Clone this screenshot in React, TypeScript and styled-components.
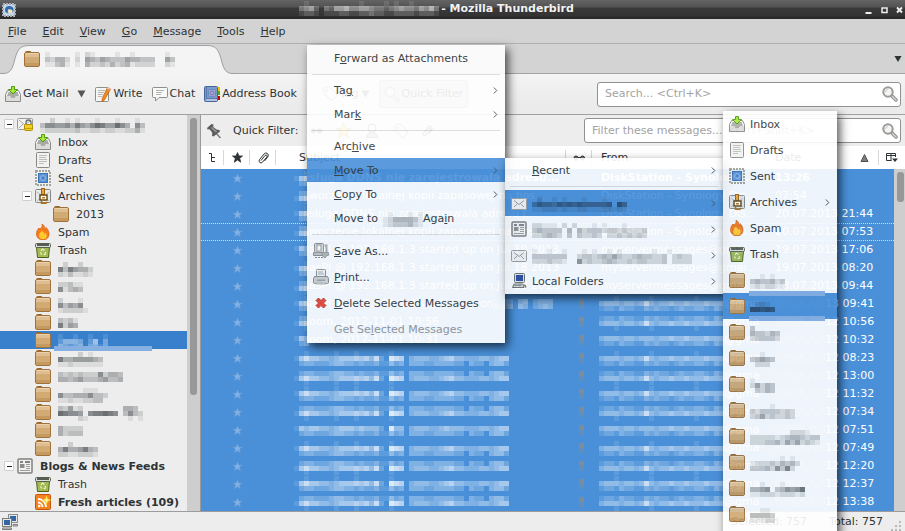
import React from "react";
import styled, { createGlobalStyle, css } from "styled-components";

const GlobalStyle = createGlobalStyle`
  *, *::before, *::after { box-sizing: border-box; }
  html, body { margin: 0; padding: 0; }
  body { font: 11px/18px "DejaVu Sans", sans-serif; color: #2e3436; }
  button, input { font: inherit; color: inherit; margin: 0; padding: 0; border: 0; background: none; }
  button { text-align: left; white-space: nowrap; }
  svg { display: block; flex: none; }
  ul { list-style: none; margin: 0; padding: 0; }
  u { text-underline-offset: 1px; }
`;

/* ---------- Redacted text: a grid of 5px cells, each digit an opacity ---------- */

type MosaicProps = { rows: string[]; color?: string; top?: number; height?: number };

function Mosaic({ rows, color = "#4a4f52", top = 0, height }: MosaicProps) {
  const cols = Math.max(...rows.map((r) => r.length));
  return (
    <svg width={cols * 5} height={height ?? rows.length * 5} fill={color} shapeRendering="crispEdges" aria-hidden="true">
      {rows.flatMap((row, y) =>
        row.split("").map((c, x) =>
          c === "0" ? null : <rect key={`${x}-${y}`} x={x * 5} y={top + y * 5} width={5} height={5} opacity={Number(c) / 10} />
        )
      )}
    </svg>
  );
}

/* ---------- Icons ---------- */

const svg16 = { width: 16, height: 16, viewBox: "0 0 16 16", "aria-hidden": true } as const;

const FolderIcon = () => (
  <svg {...svg16}>
    <path d="M1.5 3V1.5q0-1 1-1H6q1 0 1 1V3z" fill="#b8874b" stroke="#946527" />
    <rect x=".5" y="1.5" width="15" height="14" rx="1.5" fill="#d2aa74" stroke="#a0713a" />
    <path d="M1 3h14v3H1z" fill="#dfbf92" />
    <path d="M1.5 2.5h13" stroke="#ecd3ae" />
    <path d="M1 12h14v3H1z" fill="#c49a60" />
  </svg>
);
const InboxIcon = () => (
  <svg {...svg16}>
    <path d="M2.500 4.500h11l2 4v7H.5v-7z" fill="#f4f4f2" stroke="#8a8c88" />
    <path d="M3.500 6h9l1.500 4h-3l-1 2h-4l-1-2h-3z" fill="#a9aba7" />
    <path d="M1 10h4l1 2h4l1-2h4v5H1z" fill="#dcdcda" />
    <path d="M6.500.5h3v3h3L8 8 3.500 3.500h3z" fill="#a6e83c" stroke="#4e9a06" />
  </svg>
);
const DraftsIcon = () => (
  <svg {...svg16}>
    <rect x="1.500" y=".5" width="13" height="15" rx="1" fill="#f2f2f1" stroke="#878986" />
    <path d="M4 3.500h8M4 5.500h7M4 7.500h8M4 9.500h8M4 11.500h5" stroke="#bcbebb" />
  </svg>
);
const SentIcon = () => (
  <svg {...svg16}>
    <rect x="1" y="1" width="14" height="14" fill="#f1f1ec" stroke="#a2a49e" strokeWidth="2" strokeDasharray="2 1" />
    <rect x="3.500" y="3.500" width="9" height="9" fill="#5a93d6" stroke="#3b73ba" />
    <circle cx="8" cy="8" r="2.500" fill="none" stroke="#8fb6e4" />
    <circle cx="8" cy="8" r="1" fill="#3b73ba" />
  </svg>
);
const ArchiveIcon = () => (
  <svg {...svg16}>
    <rect x=".5" y="1.500" width="15" height="13" rx="1" fill="#e9e9e7" stroke="#868884" />
    <path d="M2 4l5 4-5 5M14 4L9 8l5 5" fill="none" stroke="#b4b6b2" />
    <rect x="6.500" y=".5" width="3" height="6" fill="#e9a43a" stroke="#9c5f0a" />
    <rect x="5" y="7" width="7" height="5" fill="#fff" stroke="#6d4a14" strokeWidth="1.500" />
    <path d="M7 9h3v1.500H7z" fill="#c17d11" />
    <path d="M6.500 13v2.500h4l2-1.500" fill="none" stroke="#b36f0c" strokeWidth="1.500" />
  </svg>
);
const SpamIcon = () => (
  <svg {...svg16}>
    <path d="M7 0c1 3-1 4-2.500 5L4 4C2 6 1.500 8 1.500 10c0 3.500 3 6 6.500 6s6-2.500 6-6c0-3-1.500-5-3-6.500-.3 1-.5 1.500-1.200 2C10 3 9 1 7 0z" fill="#f57c1a" stroke="#d9560b" strokeWidth=".7" />
    <path d="M6.500 7C5 9 4 10 4 12s2 3.300 4 3.300 3.800-1.300 3.800-3.300c0-1.500-.8-2.500-1.300-3.500l-1 1.500C9 8.500 8 7 6.500 7z" fill="#fdc82c" />
  </svg>
);
const TrashIcon = () => (
  <svg {...svg16}>
    <path d="M1.500 5h13l-1 10.500h-11z" fill="#a4bb55" stroke="#4f6217" />
    <rect x=".5" y="1.500" width="15" height="4" rx="1" fill="#dde0da" stroke="#55624a" />
    <rect x="2" y="2" width="12" height="2" fill="#5a5d57" />
    <path d="M6 9l1.500-2L9.500 8.500M10.500 10l-.5 2.500H8.500M5.500 10.500l1 2" fill="none" stroke="#eef5d6" strokeWidth="1.200" />
  </svg>
);
const NewsIcon = () => (
  <svg {...svg16}>
    <rect x="1" y="1" width="14" height="14" rx="1" fill="#f3f3f2" stroke="#7f817e" strokeWidth="1.500" />
    <path d="M3 4h3M8 4h5" stroke="#5e605d" strokeWidth="1.500" />
    <path d="M3 6h4.500v4H3z" fill="#8b8d8a" />
    <path d="M9 6.500h4M9 8.500h4M9 10.500h4M3 12.500h10" stroke="#9a9c99" />
  </svg>
);
const RssIcon = () => (
  <svg {...svg16}>
    <rect x=".5" y=".5" width="15" height="15" rx="1" fill="#f58220" stroke="#c4560a" />
    <path d="M3 8.500a4.500 4.500 0 0 1 4.500 4.500M3 5a8 8 0 0 1 8 8" fill="none" stroke="#fff" strokeWidth="1.800" />
    <circle cx="4.200" cy="12" r="1.300" fill="#fff" />
    <path d="M11.500 2l1 3 3 1-3 1.500-1 3-1-3-3-1.500 3-1z" fill="#fff6a0" stroke="#f1d21b" strokeWidth=".8" />
  </svg>
);
const AccountIcon = () => (
  <svg {...svg16}>
    <rect x=".5" y="2.500" width="15" height="11" rx="1" fill="#f2f2f0" stroke="#9b9d99" />
    <path d="M2 4l6 5 6-5M2 12l4-4" fill="none" stroke="#a7a9a5" />
    <path d="M9 9V6.500a2.500 2.500 0 0 1 5 0V9" fill="none" stroke="#6d6f6b" strokeWidth="1.300" />
    <rect x="7.500" y="8.500" width="8" height="6" rx="1" fill="#f0cf28" stroke="#b29200" />
    <path d="M8 12.500h7" stroke="#c4a000" />
  </svg>
);
const EnvelopeIcon = () => (
  <svg {...svg16}>
    <rect x=".5" y="3.500" width="15" height="11" rx="1" fill="#f4f4f3" stroke="#9b9d99" />
    <path d="M3 12l4-4M13 12L9 8M3 5.500l5 4 5-4" fill="none" stroke="#9b9d99" />
  </svg>
);
const ComputerIcon = () => (
  <svg {...svg16}>
    <rect x="3.500" y=".5" width="10" height="9" rx="1" fill="#e4e5e2" stroke="#6c6e6a" />
    <rect x="5" y="2" width="7" height="6" fill="#294a9a" />
    <path d="M3 11h9l1 3.500H1.500z" fill="#d8dad6" stroke="#6c6e6a" />
    <path d="M3.500 12.500h7" stroke="#8b8d89" />
    <path d="M13.500 11.500l1.500 3" stroke="#6c6e6a" strokeWidth="1.500" />
  </svg>
);
const NetworkIcon = () => (
  <svg {...svg16}>
    <rect x="6.500" y=".5" width="9" height="8" fill="#e8e9e6" stroke="#8c8e8a" />
    <rect x="8" y="2" width="6" height="5" fill="#3465a4" />
    <rect x=".5" y="4.500" width="9" height="8" fill="#e8e9e6" stroke="#7c7e7a" />
    <rect x="2" y="6" width="6" height="5" fill="#3465a4" />
    <path d="M.5 15.500v-1.500h9v1.500zM11 10.500h4.500v1.500H11z" fill="#dcddda" stroke="#7c7e7a" />
  </svg>
);
const WriteIcon = () => (
  <svg {...svg16}>
    <rect x=".5" y="1.500" width="13" height="14" rx="1" fill="#f6f6f5" stroke="#8d8f8b" />
    <path d="M3 4.500h7M3 6.500h6M3 8.500h5M3 10.500h4" stroke="#b6b8b4" />
    <path d="M12.500 1.500l3 1.500-6 11-2.500 1.500.2-3z" fill="#f58a1f" stroke="#b55a08" strokeWidth=".7" />
    <path d="M12.500 1l2.800 1.400-.8 1.600-2.900-1.400z" fill="#e9b9a6" />
  </svg>
);
const ChatIcon = () => (
  <svg {...svg16}>
    <path d="M1.500 1.500h13q1 0 1 1v8q0 1-1 1H7l-3.500 3.500v-3.500h-2q-1 0-1-1v-8q0-1 1-1z" fill="#f8f8f8" stroke="#8d8f8b" />
    <path d="M4 4.500h8M4 6.500h6M4 8.500h5" stroke="#b3b5b1" />
  </svg>
);
const BookIcon = () => (
  <svg {...svg16}>
    <path d="M14 1h2v4h-2z" fill="#f2c500" />
    <path d="M14 5h2v4h-2z" fill="#58a80d" />
    <path d="M14 10h2v4h-2z" fill="#cc0000" />
    <rect x=".5" y=".5" width="13" height="15" rx="1" fill="#7a9ccb" stroke="#456699" />
    <path d="M2.500 1v13M2 12.500h11" stroke="#5877aa" />
    <path d="M2 14h11" stroke="#e6e9ef" />
    <rect x="4.500" y="3.500" width="7" height="7" rx="1" fill="#95a8d6" stroke="#6c89c0" />
    <circle cx="8" cy="7" r="2" fill="none" stroke="#8b78b4" />
  </svg>
);
const TagIcon = () => (
  <svg {...svg16}>
    <path d="M1.500 3l2-2h4l7.500 8-5 6-8.500-8z" fill="#eee" stroke="#777" />
    <circle cx="4.500" cy="4.500" r="1.200" fill="#fff" stroke="#777" />
  </svg>
);
const SearchIcon = () => (
  <svg {...svg16}>
    <path d="M9.500 9.500l4.500 4.500" stroke="#8d8f8b" strokeWidth="3.500" strokeLinecap="round" />
    <path d="M10.500 10.500l3.500 3.500" stroke="#d3d5d1" strokeWidth="1.500" strokeLinecap="round" />
    <circle cx="6" cy="6" r="4.700" fill="#f4f4f4" stroke="#9a9c98" strokeWidth="2" />
    <path d="M3.500 6a2.500 2.500 0 0 1 2.500-2.500" fill="none" stroke="#c9cbc8" />
  </svg>
);
const PinIcon = () => (
  <svg {...svg16}>
    <path d="M9.500 9.500l5 5.500" stroke="#777" strokeWidth="1.300" />
    <path d="M5.500 1l2 .5-.3 2.500 3.300 2.500 3 .5.5 1.500-6.500 5-1.500-.8.300-3-2.800-3.500-2 .3L1 5z" fill="#5d5f5e" />
    <path d="M5.500 4.500l5 4.500" stroke="#a0a2a1" strokeWidth="1.400" />
  </svg>
);
const PersonIcon = () => (
  <svg {...svg16}>
    <circle cx="8" cy="5" r="4" fill="#eee" stroke="#555" />
    <path d="M2.500 14.500q0-5 5.500-5t5.500 5z" fill="#aaa" stroke="#555" />
  </svg>
);
const ClipIcon = () => (
  <svg width="11" height="12" viewBox="0 0 11 12" fill="none" stroke="#2e3436" aria-hidden="true">
    <path d="M3 8.500l4-5q1-1 1.800-.2t0 1.800l-4.300 5q-1.500 1.500-2.800.3t-.2-2.800L6 2q1.800-2 3.500-.5t.2 3.500L6.500 9" />
  </svg>
);
const ThreadIcon = () => (
  <svg width="9" height="11" viewBox="0 0 9 11" fill="none" stroke="#2e3436" aria-hidden="true">
    <path d="M1 1.500h2.500v8H7M3.500 5.500H7" />
  </svg>
);
const GlassesIcon = () => (
  <svg width="13" height="7" viewBox="0 0 13 7" fill="none" stroke="#2e3436" aria-hidden="true">
    <circle cx="3" cy="4" r="2" fill="#777" />
    <circle cx="9.500" cy="4" r="2" fill="#777" />
    <path d="M5 3.500h2.500" />
  </svg>
);
const StarIcon = ({ fill, stroke, size = 11 }: { fill: string; stroke: string; size?: number }) => (
  <svg width={size} height={size} viewBox="0 0 11 11" aria-hidden="true">
    <path d="M5.500.6L7 4h3.500L7.700 6.300l1 3.900-3.200-2.300-3.200 2.300 1-3.900L.5 4H4z" fill={fill} stroke={stroke} strokeWidth=".8" />
  </svg>
);
const PickerIcon = () => (
  <svg width="12" height="11" viewBox="0 0 12 11" fill="none" stroke="#2e3436" aria-hidden="true">
    <path d="M9.500 5V1.500h-9v7h5M.5 3.500h9M5 1.500v7" />
    <path d="M6 6.500h6L9 10z" fill="#2e3436" stroke="none" />
  </svg>
);
const DownTriangle = ({ color = "#555753", w = 9 }: { color?: string; w?: number }) => (
  <svg width={w} height="8" viewBox="0 0 9 8" aria-hidden="true">
    <path d="M.5.5h8l-4 7z" fill={color} />
  </svg>
);
const SortIcon = () => (
  <svg width="9" height="8" viewBox="0 0 9 8" aria-hidden="true">
    <path d="M4.500.5l3.500 7H1z" fill="#7b7d7c" stroke="#4f5351" />
  </svg>
);
const ChevronIcon = () => (
  <svg width="5" height="7" viewBox="0 0 5 7" fill="none" stroke="#4a5254" aria-hidden="true">
    <path d="M.8.5L3.800 3.500l-3 3" />
  </svg>
);
const SaveIcon = () => (
  <svg {...svg16}>
    <rect x="1.500" y=".5" width="9" height="9" rx="1" fill="#dcdddb" stroke="#8b8d8a" />
    <rect x="4" y="2" width="4" height="6" fill="#fafafa" stroke="#9b9d9a" />
    <path d="M.5 9.500h10v3H.5z" fill="#c4c6c3" stroke="#8b8d8a" />
    <path d="M11.500 2.500h2v7" fill="none" stroke="#a5a7a4" strokeWidth="2" />
    <path d="M9 9.500h6.500v3h-1.500L12 15l-3-2.500z" fill="#b3b5b2" stroke="#888a87" strokeWidth=".7" />
    <path d="M2 14.500h8" stroke="#888a87" strokeDasharray="2 1" />
  </svg>
);
const PrintIcon = () => (
  <svg {...svg16}>
    <rect x="3.500" y=".5" width="9" height="8" rx="1" fill="#f7f7f6" stroke="#8b8d8a" />
    <path d="M5 3h5M5 5h6" stroke="#a8aaa7" />
    <path d="M1.500 7.500h13l1 2v4q0 1-1 1h-13q-1 0-1-1v-4z" fill="#d0d1cf" stroke="#8b8d8a" />
    <path d="M4 10.500h8v1.500H4z" fill="#9fa19e" />
    <path d="M3 14.500h10" stroke="#b9bbb8" strokeWidth="2" />
  </svg>
);
const DeleteIcon = () => (
  <svg {...svg16}>
    <path d="M5.500 3L8 5.500 10.500 3 13 5.500 10.500 8l2.500 2.500-2.500 2.500L8 10.500 5.500 13 3 10.500 5.500 8 3 5.500z" fill="#e8412f" stroke="#b3261a" strokeWidth=".8" />
  </svg>
);
const AppIcon = () => (
  <svg width="14" height="14" viewBox="0 0 14 14" aria-hidden="true">
    <rect x="1" y="1" width="12" height="12" fill="#dfe5ea" stroke="#a8aeb4" strokeWidth="2" strokeDasharray="2 1" />
    <rect x="2" y="2" width="10" height="10" fill="#c3d5e8" />
    <path d="M3 7q0-4 4.500-4 3 0 4 3v2l-1 2H6Q3 10 3 7z" fill="#2f69ad" />
    <path d="M6 6.500q2.500-1 4.500 1V10H6.500q-1.500-1.500-.5-3.500z" fill="#f1e3bd" />
  </svg>
);

/* ---------- Frame ---------- */

const Window = styled.div`
  position: relative;
  display: flex;
  flex-direction: column;
  height: 100vh;
  overflow: hidden;
  background: #ededed;
`;

const TitleBar = styled.header`
  flex: none;
  display: grid;
  grid-template-columns: 14px 1fr 38px;
  align-items: center;
  height: 19px;
  padding: 0 2px;
  background: linear-gradient(#646464, #525252 7px, #3a3a3a 8px, #333 16px, #2a2a2a 17px);
`;

const WindowTitle = styled.h1`
  display: flex;
  justify-content: center;
  align-items: center;
  gap: 2px;
  margin: 0;
  padding: 0 8px 3px 0;
  font-size: 11px;
  line-height: 15px;
  color: #f2f2f2;
`;

const WindowButtons = styled.div`
  display: flex;
  justify-content: space-between;
`;

const WindowButton = styled.button`
  color: #eee;
`;

const MenuBar = styled.nav`
  flex: none;
  display: flex;
  align-items: center;
  gap: 16px;
  height: 25px;
  padding: 2px 8px 0;
  background: #d3d3d3;
  border-bottom: 1px solid #b0b0b0;
`;

const TabStrip = styled.div`
  flex: none;
  display: flex;
  justify-content: space-between;
  align-items: stretch;
  height: 30px;
  padding-right: 3px;
  background: #d3d3d3;
  box-shadow: inset 0 -1px #a4a4a4;
`;

const Tab = styled.button`
  position: relative;
  display: flex;
  align-items: center;
  width: 236px;
  padding-left: 24px;
`;

const TabShape = styled.svg`
  position: absolute;
  inset: 0;
`;

const TabContent = styled.span`
  position: relative;
  display: flex;
  align-items: center;
  gap: 5px;
`;

const Toolbar = styled.div`
  flex: none;
  display: flex;
  align-items: center;
  gap: 9px;
  height: 41px;
  padding: 0 4px 0 5px;
  background: linear-gradient(#f4f4f4, #ebebeb 30px);
  border-bottom: 1px solid #a0a0a0;
`;

const ToolButton = styled.button<{ $pressed?: boolean }>`
  display: flex;
  align-items: center;
  gap: 2px;
  ${(p) =>
    p.$pressed &&
    css`
      height: 28px;
      padding: 0 4px;
      background: #cfcfcf;
      border: 1px solid #999;
      border-radius: 3px;
    `}
`;

const ToolGroup = styled.div<{ $gap: number; $start?: number }>`
  display: flex;
  align-items: center;
  gap: ${(p) => p.$gap}px;
  margin-left: ${(p) => p.$start ?? 0}px;
`;

const SearchBox = styled.label<{ $basis: number }>`
  display: flex;
  align-items: center;
  flex: 0 1 ${(p) => p.$basis}px;
  height: 25px;
  margin-left: auto;
  padding: 0 2px 0 7px;
  background: #fff;
  border: 1px solid #919191;
  border-radius: 3px;

  input {
    flex: 1;
    min-width: 0;
    outline: none;
  }
  input::placeholder {
    color: #a3a3a3;
    opacity: 1;
  }
`;

const Main = styled.main`
  flex: 1;
  min-height: 0;
  display: grid;
  grid-template-columns: 201px 1fr;
`;

const StatusBar = styled.footer`
  flex: none;
  display: flex;
  align-items: center;
  height: 20px;
  padding: 0 2px;
  border-top: 1px solid #9c9c9c;
  background: #ededed;
`;

const StatusFields = styled.div`
  display: flex;
  align-items: center;
  gap: 22px;
  margin-left: auto;
  padding-right: 2px;
`;

/* ---------- Folder tree ---------- */

const Sidebar = styled.aside`
  display: flex;
  min-height: 0;
  overflow: hidden;
  border-right: 1px solid #9a9a9a;
`;

const Tree = styled.ul`
  flex: 1;
  min-width: 0;
`;

const TreeRow = styled.li<{ $level: number; $selected?: boolean; $bold?: boolean }>`
  position: relative;
  display: flex;
  align-items: center;
  height: 18px;
  padding-left: ${(p) => 4 + p.$level * 18}px;
  white-space: nowrap;
  font-weight: ${(p) => (p.$bold ? "bold" : "normal")};
  background: ${(p) => (p.$selected ? "#3980cc" : "transparent")};
`;

const Twisty = styled.button`
  width: 10px;
  height: 10px;
  margin-right: 3px;
  background: #fff;
  border: 1px solid #cfcfcf;
  border-radius: 1px;
  display: grid;
  place-items: center;

  &::before {
    content: "";
    width: 5px;
    height: 1px;
    background: #222;
  }
`;

const TwistySpace = styled.span`
  width: 13px;
`;

const TreeLabel = styled.span`
  margin-left: 7px;
  padding-top: 2px;
`;

const Smudge = styled.span<{ $x: number; $y: number; $w: number }>`
  position: absolute;
  z-index: 1;
  left: ${(p) => p.$x}px;
  top: ${(p) => p.$y}px;
  width: ${(p) => p.$w}px;
  height: 5px;
  background: #86afe2;
`;

const ScrollTrack = styled.div<{ $width: number }>`
  flex: none;
  width: ${(p) => p.$width}px;
  padding: 3px;
  background: #cecece;
`;

const ScrollThumb = styled.div<{ $size: string }>`
  width: 7px;
  height: ${(p) => p.$size};
  background: #989898;
  border-radius: 3px;
`;

/* ---------- Message list ---------- */

const Content = styled.section`
  display: flex;
  flex-direction: column;
  min-width: 0;
  min-height: 0;
  overflow: hidden;
`;

const FilterBar = styled.div`
  flex: none;
  display: flex;
  align-items: center;
  height: 31px;
  padding: 0 4px 0 5px;
`;

const FilterLabel = styled.span`
  margin-left: 11px;
`;

const MessageTable = styled.table`
  width: 100%;
  border-collapse: collapse;
  table-layout: fixed;

  th, td {
    padding: 0;
    font-weight: inherit;
    text-align: left;
    overflow: hidden;
    white-space: nowrap;
  }
`;

const HeadRow = styled.tr`
  height: 23px;
  background: #fff;
`;

const HeadCell = styled.th<{ $rule?: boolean }>`
  background: ${(p) =>
    p.$rule ? "linear-gradient(#d8d8d8, #d8d8d8) right 4px / 1px 15px no-repeat" : "none"};
`;

const HeadButton = styled.button<{ $align?: string; $start?: number }>`
  display: flex;
  align-items: center;
  justify-content: ${(p) => p.$align ?? "center"};
  width: 100%;
  padding: 0 ${(p) => (p.$align ? 10 : 0)}px 0 ${(p) => p.$start ?? 0}px;
`;

const ListArea = styled.div`
  flex: 1;
  min-height: 0;
  display: flex;
  align-items: stretch;
  overflow: hidden;
  background: #4a90d9;
`;

const Rows = styled.div`
  flex: 1;
  min-width: 0;
`;

const dots = "repeating-linear-gradient(90deg, #ffdf70 0 1px, transparent 1px 2px)";

const MessageRow = styled.tr<{ $bold?: boolean; $focused?: boolean }>`
  height: 18px;
  color: #fff;
  font-weight: ${(p) => (p.$bold ? "bold" : "normal")};
  ${(p) =>
    p.$focused &&
    css`
      background:
        ${dots} top / 100% 1px no-repeat,
        ${dots} bottom / 100% 1px no-repeat;
    `}
`;

const Cell = styled.div<{ $start?: number; $center?: boolean }>`
  display: flex;
  align-items: center;
  justify-content: ${(p) => (p.$center ? "center" : "flex-start")};
  height: 18px;
  padding-left: ${(p) => p.$start ?? 0}px;
`;

/* ---------- Popup menus ---------- */

const Popup = styled.ul<{ $x: number; $y: number; $w: number; $pad?: number }>`
  position: absolute;
  left: ${(p) => p.$x}px;
  top: ${(p) => p.$y}px;
  width: ${(p) => p.$w}px;
  padding: ${(p) => p.$pad ?? 0}px 0;
  background: #fff;
  opacity: 0.9;
  box-shadow: 3px 4px 9px rgba(0, 0, 0, 0.75);
`;

const PopupItem = styled.li<{ $active?: boolean; $rule?: boolean }>`
  position: relative;
  background: ${(p) => (p.$active ? "#4a90d9" : "transparent")};
  ${(p) =>
    p.$rule &&
    css`
      height: 8px;
      padding: 4px 5px 0;
      &::before {
        content: "";
        display: block;
        height: 1px;
        background: #dcdcdc;
      }
    `}
`;

const PopupButton = styled.button<{ $tall?: boolean }>`
  display: grid;
  grid-template-columns: 21px 1fr 5px;
  align-items: center;
  width: 100%;
  height: ${(p) => (p.$tall ? 26 : 24)}px;
  padding: 0 7px 0 6px;

  &:disabled {
    color: #949698;
  }
`;

const PopupLabel = styled.span`
  display: flex;
  align-items: center;
  padding-top: 2px;
  white-space: pre;
`;

/* ---------- Data ---------- */

type Folder = {
  level: number;
  icon: React.ReactNode;
  name: React.ReactNode;
  open?: boolean;
  bold?: boolean;
  selected?: boolean;
};

const folders: Folder[] = [
  { level: 0, icon: <AccountIcon />, open: true, name: <Mosaic rows={["002001010001000100010", "366556475468755864063", "122222231122122112241"]} /> },
  { level: 1, icon: <InboxIcon />, name: "Inbox" },
  { level: 1, icon: <DraftsIcon />, name: "Drafts" },
  { level: 1, icon: <SentIcon />, name: "Sent" },
  { level: 1, icon: <ArchiveIcon />, open: true, name: "Archives" },
  { level: 2, icon: <FolderIcon />, name: "2013" },
  { level: 1, icon: <SpamIcon />, name: "Spam" },
  { level: 1, icon: <TrashIcon />, name: "Trash" },
  { level: 1, icon: <FolderIcon />, name: <Mosaic rows={["0200200", "7375442", "2131121"]} /> },
  { level: 1, icon: <FolderIcon />, name: <Mosaic rows={["22311", "61343"]} /> },
  { level: 1, icon: <FolderIcon />, name: <Mosaic rows={["200010", "635460", "122221"]} /> },
  { level: 1, icon: <FolderIcon />, name: <Mosaic rows={["3231", "7254"]} /> },
  { level: 1, icon: <FolderIcon />, selected: true, name: <Mosaic color="#fff" rows={["1001001001", "2444302503", "4323403413"]} /> },
  { level: 1, icon: <FolderIcon />, name: <Mosaic rows={["000020100", "744555543", "112111111"]} /> },
  { level: 1, icon: <FolderIcon />, name: <Mosaic rows={["3232322262443", "4434533345334"]} /> },
  { level: 1, icon: <FolderIcon />, name: <Mosaic rows={["0000011100", "6334446332", "1121122330"]} /> },
  { level: 1, icon: <FolderIcon />, name: <Mosaic rows={["32512000000004430", "87665067787603632", "00002100000000101"]} /> },
  { level: 1, icon: <FolderIcon />, name: <Mosaic rows={["42222", "42333"]} /> },
  { level: 1, icon: <FolderIcon />, name: <Mosaic rows={["00200000", "47445743", "22112221"]} /> },
  { level: 0, icon: <NewsIcon />, open: true, bold: true, name: "Blogs & News Feeds" },
  { level: 1, icon: <TrashIcon />, name: "Trash" },
  { level: 1, icon: <RssIcon />, bold: true, name: "Fresh articles (109)" },
];

type Message = {
  subject?: string;
  tail?: string[];
  from: string;
  date: string;
  bold?: boolean;
  focused?: boolean;
  masked?: boolean;
};

const messages: Message[] = [
  { subject: "sługa DDNS nie zarejestrowała adresu...", from: "DiskStation - Synology...", date: "13:26", bold: true },
  { subject: "worzenie lokalnej kopii zapasowej na hos...", from: "DiskStation - Synology Dis...", date: "07:54" },
  { subject: "sługa DDNS nie zarejestrowała adresu I...", from: "DiskStation - Synology Dis...", date: "20.07.2013 21:44" },
  { subject: "worzenie lokalnej kopii zapasowej na hos...", from: "DiskStation - Synology Dis...", date: "20.07.2013 07:53", focused: true },
  { subject: "asPI @ 192.168.1.3 started up on Jul 19 2013", from: "myservermessages@gmai...", date: "19.07.2013 17:06" },
  { subject: "asPI @ 192.168.1.3 started up on Jul 18 2013", from: "myservermessages@gmai...", date: "19.07.2013 08:20" },
  { subject: "asPI @ 192.168.1.3 started up on Jul 18 2013", from: "myservermessages@gmai...", date: "18.07.2013 09:44" },
  { subject: "asPI @ 192.168.1.3 started up on ", tail: ["203203402333", "313304302343"], from: "", date: "13 09:41", masked: true },
  { subject: "oom, 2012-11-01 10:56", from: "", date: "12 10:56", masked: true },
  { subject: "oom, 2012-11-01 10:31", from: "", date: "12 10:32", masked: true },
  ...["08:23", "13:00", "11:32", "07:34", "07:51", "07:49", "12:20", "12:37", "13:38"].map((t) => ({
    from: "",
    date: `12 ${t}`,
    masked: true,
  })),
];

const subjectFaint = "0010000010001000000100";
const subjectStrong = "157554434555656472087" + "60" + "34443345644333443455";
const subjectWeak = "023322234433232231142" + "30" + "33322333322032203442";
const fromFaint = "0001000000100000000100000";
const fromStrong = "3444344347434454454445444";
const fromWeak = "1221322113232212322332132";

/* The 5px grid does not divide the 18px row, so each row starts at its own phase. */
function maskRows(index: number, faint: string, strong: string, weak: string) {
  const phase = (((2 - 3 * index) % 5) + 5) % 5;
  if (phase === 2 || phase === 1) return { top: phase, rows: [faint, strong, weak] };
  if (phase === 0) return { top: 5, rows: [strong.replace(/[67]/g, "4"), weak] };
  return { top: phase, rows: [weak, strong, faint] };
}

const leadingCells = (s: string) => s.slice(0, 3);

const moreFolders: string[][] = [
  ["0010100", "3433423", "1212211"],
  ["02210", "77676"],
  ["300000", "433243", "233332"],
  ["00100", "34543", "02220"],
  ["10000", "25243", "03243"],
  ["000010000", "323333232", "235232232"],
  ["00000000222100", "22222123443233", "22233425352321"],
  ["0000001010", "1222324342", "3334263720"],
  ["00100010000", "44560346568", "11222122212"],
  ["00110", "44443", "11122"],
  ["00100", "33433"],
];

/* ---------- Parts ---------- */

function MenuEntry({
  label,
  icon,
  sub,
  active,
  tall,
  disabled,
  children,
}: {
  label: React.ReactNode;
  icon?: React.ReactNode;
  sub?: boolean;
  active?: boolean;
  tall?: boolean;
  disabled?: boolean;
  children?: React.ReactNode;
}) {
  return (
    <PopupItem role="none" $active={active}>
      <PopupButton role="menuitem" aria-haspopup={sub ? "menu" : undefined} disabled={disabled} $tall={tall}>
        <span>{icon}</span>
        <PopupLabel>{label}</PopupLabel>
        {sub && <ChevronIcon />}
      </PopupButton>
      {children}
    </PopupItem>
  );
}

const MessageColumns = ({ last }: { last: number }) => (
  <colgroup>
    <col width={23} />
    <col width={26} />
    <col width={26} />
    <col />
    <col width={26} />
    <col width={174} />
    <col width={113} />
    <col width={last} />
  </colgroup>
);

export default function App() {
  return (
    <Window>
      <GlobalStyle />
      <TitleBar>
        <AppIcon />
        <WindowTitle>
          <Mosaic color="#fff" rows={["0100000000001000010100100000", "3452032556445543323454435463", "1221011122112232211222212221"]} />
          <span>- Mozilla Thunderbird</span>
        </WindowTitle>
        <WindowButtons>
          <WindowButton aria-label="Minimize">
            <svg width="7" height="8" viewBox="0 0 7 8"><path d="M.5 6h6v2h-6z" fill="currentColor" /></svg>
          </WindowButton>
          <WindowButton aria-label="Maximize">
            <svg width="7" height="8" viewBox="0 0 7 8"><path d="M1 2h5v4.500H1z" fill="none" stroke="currentColor" strokeWidth="1.500" /></svg>
          </WindowButton>
          <WindowButton aria-label="Close">
            <svg width="7" height="8" viewBox="0 0 7 8"><path d="M1 1.500l5 5M6 1.500l-5 5" stroke="currentColor" strokeWidth="2" /></svg>
          </WindowButton>
        </WindowButtons>
      </TitleBar>

      <MenuBar>
        {["File", "Edit", "View", "Go", "Message", "Tools", "Help"].map((name) => (
          <button key={name}>
            <u>{name[0]}</u>
            {name.slice(1)}
          </button>
        ))}
      </MenuBar>

      <TabStrip>
        <Tab>
          <TabShape width="236" height="30" viewBox="0 0 236 30">
            <path d="M0 30v-.5h3c7 0 9-4 11-11 3-12 5-17 15-17h178c10 0 12 5 15 17 2 7 4 11 11 11h3v.5z" fill="#f4f4f4" />
            <path d="M0 29.500h3c7 0 9-4 11-11 3-12 5-17 15-17h178c10 0 12 5 15 17 2 7 4 11 11 11h3" fill="none" stroke="#9aa0a6" />
          </TabShape>
          <TabContent>
            <FolderIcon />
            <Mosaic rows={["10000010210000100100000010", "32442020543543335443330053", "11341010422324234122220021"]} />
          </TabContent>
        </Tab>
        <ToolButton aria-label="List all tabs">
          <DownTriangle color="#2e3436" w={8} />
        </ToolButton>
      </TabStrip>

      <Toolbar>
        <ToolButton>
          <InboxIcon />
          <span>Get Mail</span>
        </ToolButton>
        <ToolButton aria-label="Get mail options">
          <DownTriangle />
        </ToolButton>
        <ToolButton>
          <WriteIcon />
          <span>Write</span>
        </ToolButton>
        <ToolButton>
          <ChatIcon />
          <span>Chat</span>
        </ToolButton>
        <ToolButton>
          <BookIcon />
          <span>Address Book</span>
        </ToolButton>
        <ToolGroup $gap={9} $start={16}>
          <ToolButton>
            <TagIcon />
            <span>Tag</span>
            <DownTriangle />
          </ToolButton>
          <ToolButton $pressed aria-pressed="true">
            <SearchIcon />
            <span>Quick Filter</span>
          </ToolButton>
        </ToolGroup>
        <SearchBox $basis={304}>
          <input type="text" aria-label="Search" placeholder="Search... <Ctrl+K>" />
          <SearchIcon />
        </SearchBox>
      </Toolbar>

      <Main>
        <Sidebar>
          <Tree>
            {folders.map((f, i) => (
              <TreeRow key={i} $level={f.level} $selected={f.selected} $bold={f.bold}>
                {f.open ? <Twisty aria-label="Collapse" /> : <TwistySpace />}
                {f.icon}
                <TreeLabel>{f.name}</TreeLabel>
                {f.selected && <Smudge $x={54} $y={15} $w={98} />}
              </TreeRow>
            ))}
          </Tree>
          <ScrollTrack $width={13}>
            <ScrollThumb $size="71%" />
          </ScrollTrack>
        </Sidebar>

        <Content>
          <FilterBar>
            <PinIcon />
            <FilterLabel>Quick Filter:</FilterLabel>
            <ToolGroup $gap={13} $start={12}>
              <GlassesIcon />
              <StarIcon size={15} fill="#fce94f" stroke="#c4a000" />
              <PersonIcon />
              <TagIcon />
              <ClipIcon />
            </ToolGroup>
            <SearchBox $basis={317}>
              <input type="text" aria-label="Filter these messages" placeholder="Filter these messages... <Ctrl+Shift+K>" />
              <SearchIcon />
            </SearchBox>
          </FilterBar>

          <MessageTable>
            <MessageColumns last={26} />
            <thead>
              <HeadRow>
                <HeadCell $rule><HeadButton aria-label="Thread"><ThreadIcon /></HeadButton></HeadCell>
                <HeadCell $rule><HeadButton aria-label="Starred"><StarIcon fill="#2e3436" stroke="#2e3436" /></HeadButton></HeadCell>
                <HeadCell $rule><HeadButton aria-label="Attachments"><ClipIcon /></HeadButton></HeadCell>
                <HeadCell $rule><HeadButton $align="flex-start" $start={23}>Subject</HeadButton></HeadCell>
                <HeadCell $rule><HeadButton aria-label="Junk status"><GlassesIcon /></HeadButton></HeadCell>
                <HeadCell $rule><HeadButton $align="flex-start" $start={9}>From</HeadButton></HeadCell>
                <HeadCell $rule><HeadButton $align="space-between" $start={9}><span>Date</span><SortIcon /></HeadButton></HeadCell>
                <HeadCell><HeadButton aria-label="Choose columns"><PickerIcon /></HeadButton></HeadCell>
              </HeadRow>
            </thead>
          </MessageTable>

          <ListArea>
            <Rows>
              <MessageTable>
                <MessageColumns last={15} />
                <tbody>
                  {messages.map((m, i) => {
                    const subject = maskRows(i, subjectFaint, subjectStrong, subjectWeak);
                    const from = maskRows(i, fromFaint, fromStrong, fromWeak);
                    return (
                      <MessageRow key={i} $bold={m.bold} $focused={m.focused}>
                        <td />
                        <td><Cell $center><StarIcon fill="#7fb2ea" stroke="#5f93cc" /></Cell></td>
                        <td />
                        <td>
                          <Cell $start={18}>
                            <Mosaic color="#fff" height={18} top={subject.top} rows={m.subject ? subject.rows.map(leadingCells) : subject.rows} />
                            {m.subject}
                            {m.tail && <Mosaic color="#fff" rows={m.tail} />}
                          </Cell>
                        </td>
                        <td><Cell $start={13}><Mosaic color="#a08a70" rows={["6", "3"]} /></Cell></td>
                        <td>
                          <Cell $start={m.masked ? 7 : 9}>
                            {m.masked ? <><Mosaic color="#fff" height={18} top={from.top} rows={from.rows} />@gma</> : m.from}
                          </Cell>
                        </td>
                        <td colSpan={2}>
                          <Cell $start={9}>
                            {m.masked && <Mosaic color="#fff" rows={["2122120212", "1211212121"]} />}
                            {m.date}
                          </Cell>
                        </td>
                      </MessageRow>
                    );
                  })}
                </tbody>
              </MessageTable>
            </Rows>
            <ScrollTrack $width={11}>
              <ScrollThumb $size="30px" />
            </ScrollTrack>
          </ListArea>
        </Content>
      </Main>

      <StatusBar>
        <NetworkIcon />
        <StatusFields>
          <span>Selected: 757</span>
          <span>Total: 757</span>
        </StatusFields>
        <svg width="18" height="18" viewBox="0 0 18 18" aria-hidden="true">
          <path d="M14 8h2v2h-2zM10 12h2v2h-2zM14 12h2v2h-2zM6 16h2v2H6zM10 16h2v2h-2zM14 16h2v2h-2z" fill="#b9b9b9" />
        </svg>
      </StatusBar>

      <Popup role="menu" aria-label="Message" $x={307} $y={45} $w={198} $pad={1}>
        <MenuEntry label={<span>F<u>o</u>rward as Attachments</span>} />
        <PopupItem role="separator" $rule />
        <MenuEntry sub label={<span>Ta<u>g</u></span>} />
        <MenuEntry sub label={<span>Mar<u>k</u></span>} />
        <PopupItem role="separator" $rule />
        <MenuEntry label={<span>Arc<u>h</u>ive</span>} />
        <MenuEntry sub active label={<span><u>M</u>ove To</span>} />
        <MenuEntry sub label={<span><u>C</u>opy To</span>} />
        <MenuEntry
          label={<>Move to<Mosaic rows={["001000101", "012444431", "012333421"]} />  <span>Aga<u>i</u>n</span></>}
        />
        <PopupItem role="separator" $rule />
        <MenuEntry tall icon={<SaveIcon />} label={<span><u>S</u>ave As...</span>} />
        <MenuEntry tall icon={<PrintIcon />} label={<span><u>P</u>rint...</span>} />
        <MenuEntry tall icon={<DeleteIcon />} label={<span><u>D</u>elete Selected Messages</span>} />
        <MenuEntry tall disabled label={<span>Get Se<u>l</u>ected Messages</span>} />
      </Popup>

      <Popup role="menu" aria-label="Move To" $x={505} $y={158} $w={218}>
        <MenuEntry sub label={<span><u>R</u>ecent</span>} />
        <PopupItem role="separator" $rule />
        <MenuEntry tall sub active icon={<EnvelopeIcon />} label={<Mosaic color="#1c2b3c" rows={["0200101000100010000", "4655465656555556075", "1122212112211122121"]} />} />
        <MenuEntry tall sub icon={<NewsIcon />} label={<Mosaic rows={["22111020200010100010000", "34333304042333233232223", "22343203032232022323232"]} />} />
        <MenuEntry tall sub icon={<EnvelopeIcon />} label={<Mosaic rows={["10010010001010010100000010010000", "33333330023323435322343322302322", "22232210062322343223233222302222"]} />} />
        <MenuEntry tall sub icon={<ComputerIcon />} label="Local Folders" />
      </Popup>

      <Popup role="menu" aria-label="Folders" $x={723} $y={111} $w={114}>
        <MenuEntry tall icon={<InboxIcon />} label="Inbox" />
        <MenuEntry tall icon={<DraftsIcon />} label="Drafts" />
        <MenuEntry tall icon={<SentIcon />} label="Sent" />
        <MenuEntry tall sub icon={<ArchiveIcon />} label="Archives" />
        <MenuEntry tall icon={<SpamIcon />} label="Spam" />
        <MenuEntry tall icon={<TrashIcon />} label="Trash" />
        {moreFolders.map((rows, i) => (
          <MenuEntry
            key={i}
            tall
            active={i === 1}
            icon={<FolderIcon />}
            label={<Mosaic color={i === 1 ? "#1c2b3c" : undefined} rows={rows} />}
          >
            {i === 1 && (
              <>
                <Smudge $x={26} $y={-2} $w={76} />
                <Smudge $x={26} $y={23} $w={76} />
              </>
            )}
          </MenuEntry>
        ))}
      </Popup>
    </Window>
  );
}
